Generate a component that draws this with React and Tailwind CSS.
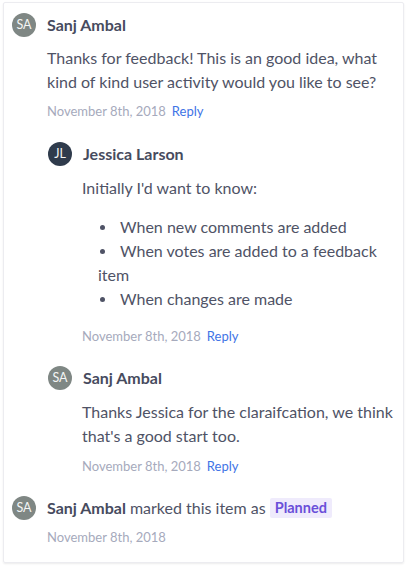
export default function App() {
  const Avatar = ({ initials, dark }) => (
    <div
      className={`w-6 h-6 rounded-full flex items-center justify-center shrink-0 text-[12.5px] text-[#f4f5f5] ${
        dark ? "bg-[#2f3b4c]" : "bg-[#7f8784]"
      }`}
    >
      {initials}
    </div>
  );
  const Meta = ({ reply = true, className = "" }) => (
    <div className={`text-[13px] leading-[18px] text-[#a6aabc] ${className}`}>
      November 8th, 2018
      {reply && <span className="ml-[6px] text-[#3f74e6]">Reply</span>}
    </div>
  );
  const Header = ({ initials, name, dark }) => (
    <div className="flex items-center gap-[11px] h-6">
      <Avatar initials={initials} dark={dark} />
      <div className="font-bold text-[16px] leading-6 text-[#474b5e]">{name}</div>
    </div>
  );
  const Dot = () => (
    <span className="inline-block w-[22px] pl-[2px] align-middle">
      <span className="block w-[5px] h-[5px] rounded-full bg-[#4f5366] mb-[2px]" />
    </span>
  );

  return (
    <div
      className="bg-white w-[407px] h-[567px] pt-[2px] px-[3px]"
      style={{ fontFamily: "Lato, 'Noto Sans', sans-serif" }}
    >
      <div className="border border-[#ececf0] rounded-[2px] shadow-[0_1px_2px_rgba(0,0,0,0.08)] pt-[10px] pl-[8px] pr-[8px] pb-[16px] h-[561px]">
        {/* Comment 1 */}
        <Header initials="SA" name="Sanj Ambal" />
        <div className="ml-[35px]">
          <p className="mt-[9px] text-[16px] leading-6 text-[#4f5366]">
            Thanks for feedback! This is an good idea, what kind of kind user activity would you like to see?
          </p>
          <Meta className="mt-[8px]" />
        </div>

        {/* Nested */}
        <div className="ml-[36px]">
          <div className="mt-[22px]">
            <Header initials="JL" name="Jessica Larson" dark />
            <div className="ml-[34px]">
              <p className="mt-[10px] text-[16px] leading-6 text-[#4f5366]">Initially I'd want to know:</p>
              <ul className="mt-[15px] pl-[16px] text-[16px] leading-6 text-[#4f5366]">
                <li>
                  <Dot />When new comments are added
                </li>
                <li>
                  <Dot />When votes are added to a feedback item
                </li>
                <li>
                  <Dot />When changes are made
                </li>
              </ul>
              <Meta className="mt-[16px]" />
            </div>
          </div>

          <div className="mt-[21px]">
            <Header initials="SA" name="Sanj Ambal" />
            <div className="ml-[34px]">
              <p className="mt-[10px] text-[16px] leading-6 text-[#4f5366]">
                Thanks Jessica for the claraifcation, we think that's a good start too.
              </p>
              <Meta className="mt-[9px]" />
            </div>
          </div>
        </div>

        {/* Status change */}
        <div className="mt-[21px] flex items-center gap-[11px] h-6">
          <Avatar initials="SA" />
          <div className="text-[16px] leading-6 text-[#4f5366] flex items-center">
            <span className="font-bold text-[#474b5e]">Sanj Ambal</span>
            <span className="ml-[4px]">marked this item as</span>
            <span className="ml-[4px] px-[5px] h-5 leading-5 rounded-[2px] bg-[#efebfc] text-[#6a4fd9] font-bold text-[14.5px]">
              Planned
            </span>
          </div>
        </div>
        <Meta reply={false} className="ml-[35px] mt-[8px]" />
      </div>
    </div>
  );
}
